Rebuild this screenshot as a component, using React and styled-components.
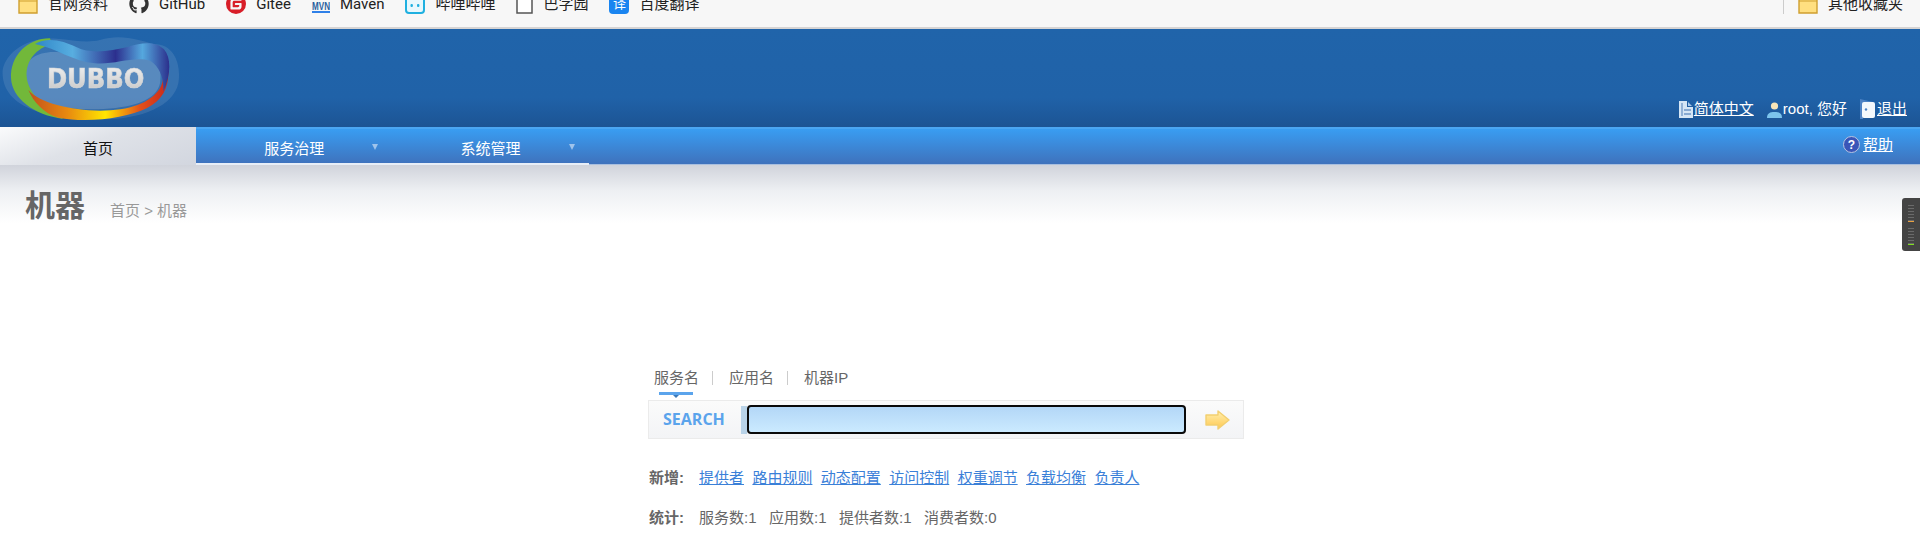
import React from 'react';
import styled, { createGlobalStyle } from 'styled-components';
import { FaGithub } from 'react-icons/fa';
import { SiGitee } from 'react-icons/si';

const Global = createGlobalStyle`
  html, body { margin: 0; padding: 0; background: #fff; overflow: hidden; }
  body { font-family: "Liberation Sans", "Noto Sans CJK SC", sans-serif; font-size: 15px; }
`;

const Page = styled.div`
  position: relative;
  width: 1920px;
  height: 559px;
  overflow: hidden;
`;

/* browser bookmarks bar, its top is cut off in the shot */
const BookmarkBar = styled.div`
  height: 27px;
  background: #f7f7f7;
  border-bottom: 2px solid #d6d4d4;
  overflow: hidden;
  display: flex;
  justify-content: space-between;
  align-items: flex-start;
`;
const BookmarkGroup = styled.div`
  display: flex;
  gap: 21px;
  height: 20px;
  margin-top: -6px;
  padding-left: ${p => p.$left || 0}px;
  padding-right: ${p => p.$right || 0}px;
`;
const Bookmark = styled.div`
  display: flex;
  align-items: center;
  gap: 10px;
  font-family: Roboto, "Noto Sans CJK SC", sans-serif;
  font-size: 15px;
  line-height: 20px;
  color: #222;
  white-space: nowrap;
  svg { flex: none; }
`;
const BarDivider = styled.div`
  width: 1px;
  height: 20px;
  background: #ccc;
  margin-right: -7px;
`;
const TileIcon = styled.span`
  width: 20px;
  height: 20px;
  border-radius: 4px;
  background: #1a85f0;
  color: #fff;
  font-size: 13px;
  line-height: 19px;
  text-align: center;
  flex: none;
`;

const Header = styled.header`
  height: 98px;
  background: linear-gradient(#2064aa 0%, #2062a8 70%, #1c5494 100%);
  display: flex;
  justify-content: space-between;
  align-items: flex-end;
`;
const LogoBox = styled.div`
  width: 200px;
  height: 98px;
  svg { display: block; filter: blur(0.5px); }
`;
const UserLinks = styled.div`
  display: flex;
  align-items: center;
  gap: 13px;
  padding: 0 13px 8px 0;
  color: #fff;
  font-size: 15px;
  line-height: 18px;
`;
const UserItem = styled.span`
  display: flex;
  align-items: center;
  gap: 1px;
  text-decoration: ${p => (p.$link ? 'underline' : 'none')};
  svg { flex: none; }
`;

const Nav = styled.nav`
  height: 38px;
  box-sizing: border-box;
  border-top: 2px solid #4ba6f2;
  border-bottom: 1px solid #a9bfdf;
  background: linear-gradient(#399df2, #3f72bc);
  display: flex;
  align-items: stretch;
  color: #fff;
`;
const NavTab = styled.div`
  position: relative;
  width: 196.2px;
  box-sizing: border-box;
  margin-bottom: -1px;
  text-align: center;
  font-size: 15px;
  line-height: 18px;
  color: ${p => (p.$active ? '#111' : '#fff')};
  background: ${p => (p.$active ? 'linear-gradient(160deg, #fafbfc 0%, #dfe2e8 45%, #d2d6df 100%)' : 'none')};
  border-bottom: ${p => (p.$active ? 'none' : '2px solid #e8eef7')};
  margin-top: ${p => (p.$active ? '-2px' : '0')};
  padding-top: ${p => (p.$active ? '13px' : '11px')};
`;
const NavArrow = styled.i`
  position: absolute;
  right: 14px;
  top: 15px;
  border-left: 3px solid transparent;
  border-right: 3px solid transparent;
  border-top: 6px solid #9fc4ec;
`;
const HelpLink = styled.div`
  margin-left: auto;
  padding: 7px 27px 0 0;
  display: flex;
  align-items: flex-start;
  gap: 3px;
  font-size: 15px;
  line-height: 18px;
  span { text-decoration: underline; }
`;

const TitleBand = styled.div`
  height: 58px;
  box-sizing: border-box;
  padding: 22px 0 0 25px;
  background: linear-gradient(#d0d3db 0%, #eef0f3 45%, #fff 100%);
  display: flex;
  align-items: baseline;
  gap: 25px;
`;
const Title = styled.h1`
  margin: 0;
  font-size: 30px;
  line-height: 38px;
  font-weight: 700;
  color: #666;
`;
const Crumb = styled.span`
  font-size: 15px;
  color: #999;
`;

const SearchArea = styled.section`
  width: 596px;
  margin: 145px 0 0 648px;
`;
const SearchTabs = styled.div`
  display: flex;
  align-items: center;
  height: 20px;
  padding-left: 6px;
  font-size: 15px;
  line-height: 20px;
  color: #666;
`;
const SearchTab = styled.span`
  position: relative;
  &[data-active]::after {
    content: "";
    position: absolute;
    left: 5px;
    right: 6px;
    top: 24px;
    height: 3px;
    background: #5ba4ec;
  }
  &[data-active]::before {
    content: "";
    position: absolute;
    left: 19px;
    top: 27px;
    border-left: 3px solid transparent;
    border-right: 3px solid transparent;
    border-top: 3px solid #3c79b8;
  }
`;
const TabSep = styled.span`
  width: 1px;
  height: 14px;
  background: #ccc;
  margin: 0 16px 0 13px;
`;
const SearchBox = styled.div`
  margin-top: 12px;
  height: 39px;
  box-sizing: border-box;
  border: 1px solid #ebebeb;
  background: linear-gradient(#fbfbfb, #f3f4f6);
  display: flex;
  align-items: center;
`;
const SearchLabel = styled.span`
  width: 92px;
  box-sizing: border-box;
  padding: 0 0 2px 14px;
  font-family: "Open Sans", sans-serif;
  font-weight: 700;
  font-size: 16px;
  color: #5ba4ec;
`;
const InputStrip = styled.span`
  width: 6px;
  height: 28px;
  background: #b9d3e8;
`;
const SearchInput = styled.input`
  width: 439px;
  height: 29px;
  box-sizing: border-box;
  border: 2px solid #0a0a0a;
  border-radius: 4px;
  outline: none;
  background: linear-gradient(#b3d7f7, #cbeaff);
`;
const GoButton = styled.button`
  flex: 1;
  border: none;
  background: none;
  padding: 0 0 0 6px;
  display: flex;
  justify-content: center;
`;
const InfoRow = styled.div`
  display: flex;
  margin-top: ${p => p.$top}px;
  font-size: 15px;
  line-height: 20px;
  color: #666;
`;
const InfoLabel = styled.b`
  width: 50px;
  padding-left: 1px;
  color: #666;
`;
const InfoList = styled.div`
  display: flex;
  gap: ${p => p.$gap}px;
`;
const AddLink = styled.a`
  color: #3a80d8;
  text-decoration: underline;
`;

const SideWidget = styled.div`
  position: absolute;
  right: 0;
  top: 198px;
  width: 18px;
  height: 53px;
  box-sizing: border-box;
  padding: 7px 0 0 6px;
  background: #444;
  border-radius: 3px 0 0 3px;
`;
const Meter = styled.div`
  width: 6px;
  height: 16px;
  margin-bottom: 6px;
  background: repeating-linear-gradient(#6a6a6a 0 1px, transparent 1px 3px);
  border-bottom: 1px solid ${p => p.$color};
`;

const Folder = () => (
  <svg width="20" height="20" viewBox="0 0 20 20">
    <path d="M1 2h6l2 2h10v15H1z" fill="#ffdf80" stroke="#cf9f2f" strokeWidth="1.4" />
    <path d="M1 7h18" stroke="#cf9f2f" strokeWidth="1" />
  </svg>
);

const MvnIcon = () => (
  <svg width="18" height="20" viewBox="0 0 18 20">
    <text x="9" y="15.500" textAnchor="middle" fontFamily="Liberation Sans" fontWeight="700" fontSize="10" textLength="18" lengthAdjust="spacingAndGlyphs" fill="#2a5f9e">MVN</text>
    <rect x="0" y="17" width="18" height="2" fill="#2f80e8" />
  </svg>
);

const BiliIcon = () => (
  <svg width="20" height="20" viewBox="0 0 20 20">
    <rect x="1" y="1" width="18" height="18" rx="3" fill="#e8f8fd" stroke="#1fb0e0" strokeWidth="2" />
    <rect x="5.5" y="10" width="2.4" height="3" rx="1" fill="#1fb0e0" />
    <rect x="12" y="10" width="2.4" height="3" rx="1" fill="#1fb0e0" />
  </svg>
);

const FileIcon = () => (
  <svg width="17" height="20" viewBox="0 0 17 20">
    <path d="M1 1h15v18H1z" fill="#fff" stroke="#555" strokeWidth="1.5" />
  </svg>
);

const Logo = () => (
  <svg width="200" height="98" viewBox="0 27 600 294">
    <defs>
      <linearGradient id="topBand" x1="0" y1="0" x2="1" y2="0">
        <stop offset="0" stopColor="#2f87c8" />
        <stop offset=".28" stopColor="#58aee0" />
        <stop offset=".6" stopColor="#2c2f8e" />
        <stop offset=".8" stopColor="#55a8de" />
        <stop offset="1" stopColor="#2b2f8c" />
      </linearGradient>
      <linearGradient id="bottomBand" x1="0" y1="0" x2="1" y2="0">
        <stop offset="0" stopColor="#c2501c" />
        <stop offset=".28" stopColor="#e88a10" />
        <stop offset=".55" stopColor="#ffe600" />
        <stop offset=".8" stopColor="#e3501a" />
        <stop offset="1" stopColor="#c8281c" />
      </linearGradient>
      <linearGradient id="letters" x1="0" y1="0" x2="0" y2="1">
        <stop offset="0" stopColor="#f2f2f2" />
        <stop offset="1" stopColor="#c4c4c4" />
      </linearGradient>
    </defs>
    <path d="M8 150C20 90 90 50 170 56C220 60 260 70 300 60C360 40 420 60 460 72C520 70 545 130 535 190C520 260 420 300 300 298C160 300 0 270 8 150Z" fill="#ffffff" opacity=".1" />
    <path d="M70 170C70 110 130 85 200 100C270 115 340 130 400 105C460 95 490 130 480 190C470 240 400 265 290 268C170 270 70 240 70 170Z" fill="#ffffff" opacity=".17" />
    <path d="M150 55C80 55 30 110 33 175C36 235 100 285 190 297C140 265 85 225 80 170C77 120 110 85 155 72Z" fill="#72b83a" />
    <path d="M85 210C120 250 210 270 300 272C390 272 450 250 480 205C490 185 492 165 488 150L505 150C507 200 490 240 440 265C380 295 260 310 175 293C130 280 100 245 85 210Z" fill="url(#bottomBand)" />
    <path d="M105 72C140 50 190 62 230 82C275 104 335 92 385 80C430 65 470 65 492 88C515 115 512 165 490 215C492 175 480 140 450 122C400 108 345 135 285 130C220 125 170 85 105 72Z" fill="url(#topBand)" />
    <text x="287" y="205" textAnchor="middle" fontFamily="DejaVu Sans" fontWeight="700" fontSize="80" textLength="292" lengthAdjust="spacingAndGlyphs" fill="url(#letters)" stroke="#d8d8d8" strokeWidth="2">DUBBO</text>
  </svg>
);

const DocIcon = () => (
  <svg width="14" height="17" viewBox="0 0 14 17">
    <path d="M0 0h8v6h6v11H0z" fill="#d6e6f5" />
    <path d="M9 1l4 4H9z" fill="#a9c8e8" />
    <path d="M3 2v13M5 9h7M5 13h7" stroke="#6f97c6" strokeWidth="1.3" fill="none" />
  </svg>
);

const UserIcon = () => (
  <svg width="15" height="17" viewBox="0 0 15 17">
    <path d="M0 17c0-5 3-6 7.500-6s7.500 1 7.500 6z" fill="#7cc4ec" />
    <circle cx="7.500" cy="5" r="3.600" fill="#f6e4b8" />
  </svg>
);

const DoorIcon = () => (
  <svg width="16" height="20" viewBox="0 0 16 20">
    <path d="M0 0l13 3v3H3v14H0z" fill="#4d82c4" />
    <rect x="2" y="3" width="13" height="16" rx="2" fill="#f4f8fc" />
    <circle cx="6" cy="10.500" r="1.200" fill="#4d82c4" />
  </svg>
);

const HelpIcon = () => (
  <svg width="17" height="17" viewBox="0 0 17 17">
    <circle cx="8.500" cy="8.500" r="8" fill="#3a55b8" stroke="#b8c4e0" strokeWidth="1" />
    <text x="8.500" y="13" textAnchor="middle" fontFamily="Liberation Sans" fontWeight="700" fontSize="12" fill="#fff">?</text>
  </svg>
);

const GoArrow = () => (
  <svg width="25" height="20" viewBox="0 0 25 20">
    <defs>
      <linearGradient id="goFill" x1="0" y1="0" x2="0" y2="1">
        <stop offset="0" stopColor="#fff0b0" />
        <stop offset="1" stopColor="#ffc850" />
      </linearGradient>
    </defs>
    <path d="M1 5h12V1l11 9-11 9v-4H1z" fill="url(#goFill)" stroke="#f2cf70" strokeWidth="1.400" strokeLinejoin="round" />
  </svg>
);

const addLinks = ['提供者', '路由规则', '动态配置', '访问控制', '权重调节', '负载均衡', '负责人'];
const stats = ['服务数:1', '应用数:1', '提供者数:1', '消费者数:0'];

export default function App() {
  return (
    <Page>
      <Global />
      <BookmarkBar>
        <BookmarkGroup $left={18}>
          <Bookmark><Folder />官网资料</Bookmark>
          <Bookmark><FaGithub size={20} color="#333" />GitHub</Bookmark>
          <Bookmark><SiGitee size={20} color="#d81e28" />Gitee</Bookmark>
          <Bookmark><MvnIcon />Maven</Bookmark>
          <Bookmark><BiliIcon />哔哩哔哩</Bookmark>
          <Bookmark><FileIcon />巴字园</Bookmark>
          <Bookmark><TileIcon>译</TileIcon>百度翻译</Bookmark>
        </BookmarkGroup>
        <BookmarkGroup $right={17}>
          <BarDivider />
          <Bookmark><Folder />其他收藏夹</Bookmark>
        </BookmarkGroup>
      </BookmarkBar>

      <Header>
        <LogoBox><Logo /></LogoBox>
        <UserLinks>
          <UserItem $link><DocIcon />简体中文</UserItem>
          <UserItem><UserIcon />root, 您好</UserItem>
          <UserItem $link><DoorIcon />退出</UserItem>
        </UserLinks>
      </Header>

      <Nav>
        <NavTab $active>首页</NavTab>
        <NavTab>服务治理<NavArrow /></NavTab>
        <NavTab>系统管理<NavArrow /></NavTab>
        <HelpLink><HelpIcon /><span>帮助</span></HelpLink>
      </Nav>

      <TitleBand>
        <Title>机器</Title>
        <Crumb>首页 &gt; 机器</Crumb>
      </TitleBand>

      <SearchArea>
        <SearchTabs>
          <SearchTab data-active="">服务名</SearchTab>
          <TabSep />
          <SearchTab>应用名</SearchTab>
          <TabSep />
          <SearchTab>机器IP</SearchTab>
        </SearchTabs>
        <SearchBox>
          <SearchLabel>SEARCH</SearchLabel>
          <InputStrip />
          <SearchInput />
          <GoButton><GoArrow /></GoButton>
        </SearchBox>
        <InfoRow $top={29}>
          <InfoLabel>新增:</InfoLabel>
          <InfoList $gap={8.4}>
            {addLinks.map(name => <AddLink key={name}>{name}</AddLink>)}
          </InfoList>
        </InfoRow>
        <InfoRow $top={20}>
          <InfoLabel>统计:</InfoLabel>
          <InfoList $gap={12.5}>
            {stats.map(s => <span key={s}>{s}</span>)}
          </InfoList>
        </InfoRow>
      </SearchArea>

      <SideWidget>
        <Meter $color="#e8a040" />
        <Meter $color="#80e020" />
      </SideWidget>
    </Page>
  );
}
